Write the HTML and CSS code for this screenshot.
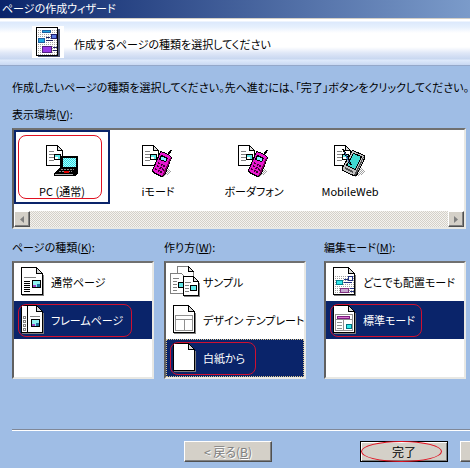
FILE: index.html
```html
<!DOCTYPE html>
<html lang="ja">
<head>
<meta charset="utf-8">
<title>ページの作成ウィザード</title>
<meta name="viewport" content="width=device-width, initial-scale=1">
<link rel="stylesheet" href="styles.css">
</head>
<body>
<svg class="sprite" aria-hidden="true">
  <defs>
    <pattern id="dither" width="2" height="2" patternUnits="userSpaceOnUse">
      <rect width="2" height="2" fill="#30d8e0"/><path fill="#a8ffff" d="M0 0h1v1H0zM1 1h1v1H1z"/>
    </pattern>
    <pattern id="dots" width="2" height="2" patternUnits="userSpaceOnUse">
      <rect width="1" height="1" fill="#a0a0a0"/>
    </pattern>
    <pattern id="shade" width="2" height="2" patternUnits="userSpaceOnUse">
      <path fill="#a0a0a0" d="M0 0h1v1H0zM1 1h1v1H1z"/>
    </pattern>
    <symbol id="sheet" viewBox="0 0 32 32">
      <path fill="#808080" d="M26 9h1v21H5v-1h21z"/>
      <path fill="#fff" stroke="#000" d="M4.500 1.500h15l6 6v21h-21z"/>
      <path fill="#d8d8d8" stroke="#000" d="M19.500 1.500v6h6z"/>
    </symbol>
    <symbol id="small-page" viewBox="0 0 32 32">
      <path fill="#fff" stroke="#000" d="M.5.5h11l5 5v15H.5z"/>
      <path fill="#ddd" stroke="#000" d="M11.500.5v5h5z"/>
      <path stroke="#808080" d="M3 6.500h5M3 9.500h5M3 12.500h5M3 15.500h5"/>
      <path fill="#60e8e8" stroke="#000" d="M8.500 9.500h6v5h-6z"/>
      <path fill="#fff" d="M9 12h3v2H9z"/>
    </symbol>
    <symbol id="phone" viewBox="0 0 32 32">
      <use href="#small-page" width="32" height="32"/>
      <path fill="url(#shade)" d="M25 23l4 3-2 3-6 3-4-1z"/>
      <path fill="none" stroke="#000" stroke-width="2" d="M26 10l3-5"/>
      <path fill="#e818d0" stroke="#000" d="M18.500 6.500l3 1 5 2 3 3-7 18-3 1-8-4-1-2z"/>
      <path fill="#80005c" d="M28 13l1 1-7 16-2 1z"/>
      <path fill="#80f0ff" stroke="#000" d="M19.500 10.500l6 3-2 3-6-2z"/>
      <path stroke="#400030" stroke-width="2" stroke-dasharray="2 1" d="M16 18l8 4M15 21l7 4M13 24l8 4"/>
    </symbol>
  </defs>
</svg>

<main class="wizard">
  <h1 class="titlebar">ページの作成ウィザード</h1>

  <header class="banner">
    <svg class="banner-icon" viewBox="0 0 32 32" shape-rendering="crispEdges" aria-hidden="true">
      <path fill="#fff" d="M0 0h32v32H0z"/>
      <path fill="#505878" d="M6 3h22v28H6z"/>
      <path fill="#fff" stroke="#000" d="M4.500 1.500h21v28h-21z"/>
      <path fill="url(#dots)" d="M6 3h19v26H6z"/>
      <path fill="#20a8e0" stroke="#2060a0" d="M10.500 4.500h8v2h-8zM6.500 12.500h6v4h-6z"/>
      <path fill="#5878e0" stroke="#202070" d="M19.500 8.500h5v4h-5z"/>
      <path stroke="#202060" d="M14 11.500h4M14 14.500h7M21 21.500h4M21 24.500h4"/>
      <path fill="#9838e8" stroke="#502080" d="M10.500 20.500h9v6h-9z"/>
    </svg>
    <h2 class="banner-title">作成するページの種類を選択してください</h2>
  </header>

  <form class="content" id="wizard-form">
    <p class="intro">作成したいページの種類を選択してください。先へ進むには、「完了」ボタンをクリックしてください。</p>

    <h3 class="label" id="env-label">表示環境(<u>V</u>):</h3>
    <div class="listbox" role="radiogroup" aria-labelledby="env-label">
      <div class="tiles">
        <label class="tile">
          <input type="radio" name="env" checked>
          <svg class="icon" viewBox="0 0 32 32" shape-rendering="crispEdges" aria-hidden="true">
            <use href="#small-page" width="32" height="32"/>
            <path fill="#000" d="M14 11h18v17l-3 3H8v-3l6-6z"/>
            <path fill="url(#dither)" d="M17 13h13v9H17z"/>
            <path stroke="#909090" stroke-dasharray="2 1" d="M15 24.500h13M13 26.500h13"/>
            <path stroke="#b0b0b0" d="M9 29.500h18"/>
            <path stroke="#e00000" stroke-width="2" d="M18 27h5"/>
          </svg>
          <span>PC (通常)</span>
        </label>
        <label class="tile">
          <input type="radio" name="env">
          <svg class="icon" viewBox="0 0 32 32" shape-rendering="crispEdges" aria-hidden="true"><use href="#phone" width="32" height="32"/></svg>
          <span>iモード</span>
        </label>
        <label class="tile">
          <input type="radio" name="env">
          <svg class="icon" viewBox="0 0 32 32" shape-rendering="crispEdges" aria-hidden="true"><use href="#phone" width="32" height="32"/></svg>
          <span>ボーダフォン</span>
        </label>
        <label class="tile">
          <input type="radio" name="env">
          <svg class="icon" viewBox="0 0 32 32" shape-rendering="crispEdges" aria-hidden="true">
            <use href="#small-page" width="32" height="32"/>
            <path fill="url(#shade)" d="M27 22l4 4-4 4-7 2-2-2z"/>
            <path fill="#c0c0c0" stroke="#000" d="M18.500 5.500l12 5v3l-8 17h-3l-11-5v-3z"/>
            <path fill="#505050" d="M29 12h1l-8 18h-2z"/>
            <path fill="#40d8d0" stroke="#000" d="M19.500 8.500l8 3-6 13-9-4z"/>
            <path stroke="#505050" stroke-width="2" d="M11 23l8 4"/>
            <path stroke="#000" stroke-width="2" d="M9 4l8 16"/>
            <path stroke="#3058a0" d="M10.500 7l5 11"/>
          </svg>
          <span>MobileWeb</span>
        </label>
      </div>
      <div class="scrollbar">
        <button type="button" class="arrow" aria-label="左へスクロール"><svg viewBox="0 0 4 7" aria-hidden="true"><path d="M4 0v7L0 3.500z"/></svg></button>
        <button type="button" class="arrow" aria-label="右へスクロール"><svg viewBox="0 0 4 7" aria-hidden="true"><path d="M0 0v7l4-3.500z"/></svg></button>
      </div>
    </div>

    <div class="columns">
      <section>
        <h3 class="label" id="kind-label">ページの種類(<u>K</u>):</h3>
        <div class="listbox list" role="radiogroup" aria-labelledby="kind-label">
          <label class="row">
            <input type="radio" name="kind">
            <svg class="icon" viewBox="0 0 32 32" shape-rendering="crispEdges" aria-hidden="true">
              <use href="#sheet" width="32" height="32"/>
              <path stroke="#808080" d="M7 11.500h12"/>
              <path stroke="#000" d="M7 15.500h6M7 17.500h6M7 19.500h6M7 21.500h6M7 23.500h6M7 25.500h6"/>
              <path fill="#90f0f0" stroke="#000" d="M15.500 14.500h8v7h-8z"/><path fill="#a040c0" d="M16 19h3v2h-3z"/><path fill="#2070a0" d="M20 18h3v3h-3z"/>
            </svg>
            <span>通常ページ</span>
          </label>
          <label class="row">
            <input type="radio" name="kind" checked>
            <svg class="icon" viewBox="0 0 32 32" shape-rendering="crispEdges" aria-hidden="true">
              <use href="#sheet" width="32" height="32"/>
              <path stroke="#000" d="M10.500 2v26"/>
              <path fill="#fff" stroke="#808080" d="M6.500 12.500h2v2h-2zM6.500 16.500h2v2h-2zM6.500 20.500h2v2h-2zM6.500 24.500h2v2h-2z"/>
              <path stroke="#808080" d="M13 12.500h10"/>
              <path fill="#90f0f0" stroke="#000" d="M14.500 15.500h8v7h-8z"/><path fill="#a040c0" d="M15 20h3v2h-3z"/><path fill="#2070a0" d="M19 19h3v3h-3z"/>
            </svg>
            <span>フレームページ</span>
          </label>
        </div>
      </section>

      <section>
        <h3 class="label" id="how-label">作り方(<u>W</u>):</h3>
        <div class="listbox list" role="radiogroup" aria-labelledby="how-label">
          <label class="row">
            <input type="radio" name="how">
            <svg class="icon" viewBox="0 0 32 32" shape-rendering="crispEdges" aria-hidden="true">
              <path fill="#fff" stroke="#808080" d="M8.500.5h11l5 5v15h-16z"/><path fill="#ddd" stroke="#000" d="M19.500.5v5h5z"/>
              <path fill="#fff" stroke="#808080" d="M1.500 7.500h11l4 4v16h-15z"/><path stroke="#808080" d="M4 12.500h6M4 15.500h4M4 18.500h4M4 21.500h4M4 24.500h4"/>
              <path fill="#60e8e8" stroke="#000" d="M9.500 16.500h5v5h-5z"/>
              <path fill="#808080" d="M30 17h1v14H15v-1h15z"/>
              <path fill="#fff" stroke="#000" d="M14.500 10.500h10l5 5v14h-15z"/><path fill="#ddd" stroke="#000" d="M24.500 10.500v5h5z"/>
              <path stroke="#808080" d="M16 16.500h6M16 19.500h4M16 22.500h4M16 25.500h4"/>
              <path fill="#60e8e8" stroke="#000" d="M21.500 19.500h6v5h-6z"/>
            </svg>
            <span>サンプル</span>
          </label>
          <label class="row">
            <input type="radio" name="how">
            <svg class="icon" viewBox="0 0 32 32" shape-rendering="crispEdges" aria-hidden="true">
              <use href="#sheet" width="32" height="32"/>
              <path fill="none" stroke="#909090" d="M6.500 11.500h17v15h-17zM7 15.500h16M15.500 16v10"/>
            </svg>
            <span>デザイン テンプレート</span>
          </label>
          <label class="row focused">
            <input type="radio" name="how" checked>
            <svg class="icon" viewBox="0 0 32 32" shape-rendering="crispEdges" aria-hidden="true"><use href="#sheet" width="32" height="32"/></svg>
            <span>白紙から</span>
          </label>
        </div>
      </section>

      <section>
        <h3 class="label" id="mode-label">編集モード(<u>M</u>):</h3>
        <div class="listbox list" role="radiogroup" aria-labelledby="mode-label">
          <label class="row">
            <input type="radio" name="mode">
            <svg class="icon" viewBox="0 0 32 32" shape-rendering="crispEdges" aria-hidden="true">
              <use href="#sheet" width="32" height="32"/>
              <path fill="url(#dots)" d="M6 10h19v18H6z"/>
              <path fill="#fff" stroke="#203080" d="M19.500 10.500h4v4h-4z"/>
              <path fill="#30e8e8" stroke="#008090" d="M7.500 14.500h6v4h-6z"/>
              <path stroke="#203080" d="M15 13.500h4M15 16.500h8M21 22.500h4M21 25.500h4"/>
              <path fill="#c8a8d0" stroke="#803080" d="M11.500 22.500h8v4h-8z"/>
            </svg>
            <span>どこでも配置モード</span>
          </label>
          <label class="row">
            <input type="radio" name="mode" checked>
            <svg class="icon" viewBox="0 0 32 32" shape-rendering="crispEdges" aria-hidden="true">
              <use href="#sheet" width="32" height="32"/>
              <path fill="none" stroke="#909090" d="M6.500 10.500h17v16h-17zM7 15.500h16M14.500 16v10M8 18.500h5M8 21.500h5M8 24.500h5"/>
              <path fill="#d878d0" stroke="#802080" d="M8.500 12.500h12v2h-12z"/>
              <path fill="#30e8e8" stroke="#007080" d="M17.500 20.500h5v4h-5z"/>
            </svg>
            <span>標準モード</span>
          </label>
        </div>
      </section>
    </div>
  </form>

  <footer class="actions">
    <button type="button" class="button" disabled>&lt; 戻る(<u>B</u>)</button>
    <button type="submit" form="wizard-form" class="button primary">完了</button>
    <button type="button" class="button" aria-label="キャンセル"></button>
  </footer>
</main>
</body>
</html>
```
FILE: styles.css
```css
* {
  box-sizing: border-box;
}

body {
  margin: 0;
  min-height: 100vh;
  background: #9fbde5;
  color: #000;
  font: 11px/16px "Noto Sans CJK JP", sans-serif;
  font-feature-settings: "palt";
}

h1, h2, h3, p {
  margin: 0;
  font-size: 11px;
  font-weight: 400;
  white-space: nowrap;
}

.sprite {
  position: absolute;
  width: 0;
  height: 0;
}

.wizard {
  overflow: hidden;
}

.titlebar {
  height: 18px;
  padding-left: 2px;
  background: linear-gradient(90deg, #0a246a, #7b9bca);
  color: #fff;
}

.banner {
  display: flex;
  align-items: center;
  gap: 10px;
  height: 48px;
  padding-left: 32px;
  border-top: 1px solid #d4d0c8;
  border-bottom: 1px solid #94a8ca;
  background: linear-gradient(#fff 0, #fff 2px, #dce9fc 3px, #e6f0fd 8px, #fff 14px, #fff 28px, #dfe7f7 34px, #c8d7f0 40px, #dfeafb 41px, #c8d8f2 46px);
}

.banner-title {
  padding-top: 4px;
}

.banner-icon,
.icon {
  flex: none;
  width: 32px;
  height: 32px;
}

.content {
  padding: 13px 4px 0 12px;
}

.label {
  margin-top: 11px;
  margin-bottom: 6px;
}

.listbox {
  border: 2px solid;
  border-color: #707070 #e8e8e4 #e8e8e4 #606060;
  background: #fff;
}

.listbox input {
  position: absolute;
  opacity: 0;
}

.tiles {
  display: flex;
  padding-right: 66px;
}

.tile {
  position: relative;
  display: flex;
  flex: 1;
  flex-direction: column;
  align-items: center;
  gap: 6px;
  height: 74px;
  padding-top: 15px;
  white-space: nowrap;
}

.tile:has(:checked) {
  box-shadow: inset 0 0 0 2px #0a246a;
}

.tile:has(:checked)::after {
  content: "";
  position: absolute;
  inset: 5px 8px 5px 4px;
  border: 1px solid #e01020;
  border-radius: 8px;
}

.scrollbar {
  display: flex;
  justify-content: space-between;
  height: 16px;
  margin-top: 7px;
  background: repeating-conic-gradient(#d4d0c8 0 25%, #f4f3f0 0 50%) 0 0 / 2px 2px;
}

.arrow {
  display: grid;
  place-items: center;
  width: 16px;
  padding: 0;
  border: 1px solid;
  border-color: #fff #505050 #505050 #fff;
  background: #d4d0c8;
  box-shadow: inset -1px -1px #808080;
}

.arrow svg {
  width: 4px;
  height: 7px;
  fill: #808080;
}

.columns {
  display: grid;
  grid-template-columns: minmax(0, 152fr) minmax(0, 160fr) minmax(0, 142fr);
}

.columns section:nth-child(1) {
  padding-right: 10px;
}

.columns section:nth-child(2) {
  padding-right: 18px;
}

.columns .label {
  margin-top: 10px;
}

.list {
  height: 118px;
}

.row {
  position: relative;
  display: flex;
  align-items: center;
  gap: 2px;
  height: 38px;
  padding-left: 3px;
  white-space: nowrap;
}

.row:has(:checked) {
  background: #0a246a;
  color: #fff;
}

.row:has(:checked)::after {
  content: "";
  position: absolute;
  inset: 3px 20px 2px 4px;
  border: 1px solid #d01030;
  border-radius: 8px;
}

.columns section:nth-child(3) .row:has(:checked)::after {
  right: 42px;
}

.focused {
  outline: 1px dotted #d8c890;
  outline-offset: -1px;
}

.columns .focused:has(:checked)::after {
  right: 48px;
}

.actions {
  display: flex;
  justify-content: flex-end;
  gap: 12px;
  margin: 50px -78px 0 12px;
  padding-top: 11px;
  border-top: 1px solid #808898;
  box-shadow: inset 0 1px #fff;
}

.button {
  position: relative;
  width: 88px;
  height: 21px;
  padding: 0;
  border: 1px solid;
  border-color: #fff #505050 #505050 #fff;
  background: #d4d0c8;
  box-shadow: inset -1px -1px #808080;
  color: #000;
  font: inherit;
  font-size: 12px;
  font-feature-settings: inherit;
}

.button:disabled {
  margin-right: 76px;
  color: #808080;
  text-shadow: 1px 1px #fff;
}

.primary {
  border-color: #000;
  box-shadow: inset 1px 1px #fff, inset -1px -1px #808080;
}

.primary::after {
  content: "";
  position: absolute;
  inset: -1px 5px -1px 0;
  border: 1px solid #e01020;
  border-radius: 50%;
}
```
